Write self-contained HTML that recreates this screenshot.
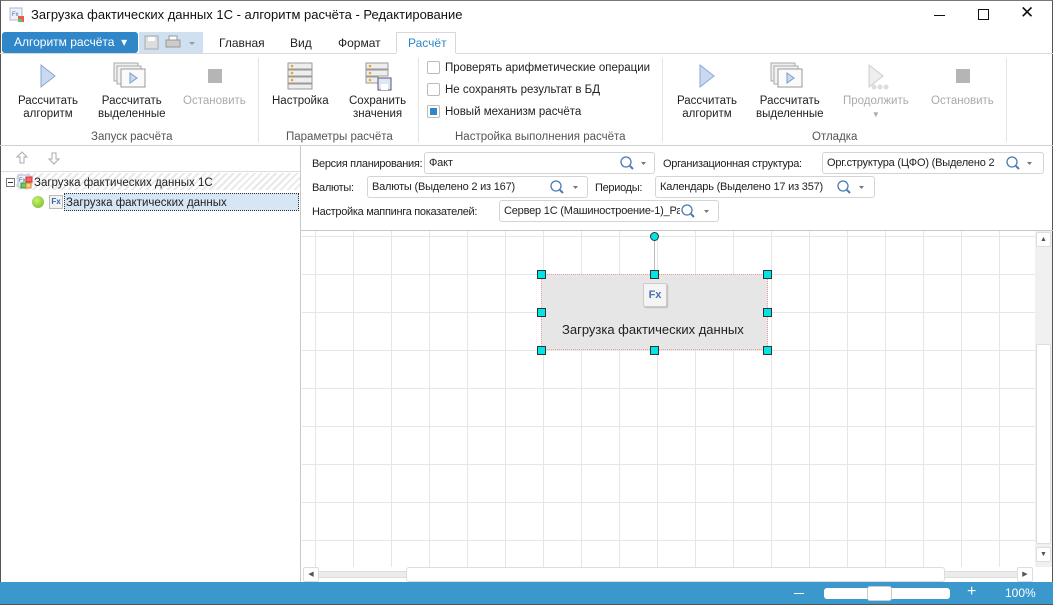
<!DOCTYPE html>
<html><head><meta charset="utf-8"><style>
*{box-sizing:border-box;margin:0;padding:0}
body{width:1053px;height:605px;overflow:hidden;background:#fff;font-family:"Segoe UI","Liberation Sans","DejaVu Sans",sans-serif;font-size:12px;color:#222;position:relative}
.abs{position:absolute}
.win{position:absolute;left:0;top:0;width:1053px;height:605px;border:1px solid #555;border-top-color:#777}
.t{position:absolute;white-space:nowrap}
.lbl{font-size:11.5px;text-align:center;line-height:13px}
.gray{color:#aaa}
.grp{color:#555;font-size:11.5px}
.combo{position:absolute;height:22px;border:1px solid #d4d4d4;border-radius:3px;background:#fff;font-size:11px;padding:0 4px;line-height:21px;white-space:nowrap;overflow:hidden;letter-spacing:-0.2px}
.pl{position:absolute;white-space:nowrap;font-size:11px;line-height:14px;letter-spacing:-0.3px}
.chk{position:absolute;width:13px;height:13px;border:1px solid #bbb;border-radius:2px;background:#fff}
</style></head><body>
<div class="win"></div>
<svg class="abs" style="left:9px;top:7px" width="16" height="16"><rect x="1" y="1" width="12" height="12" fill="#eef2f8" stroke="#b0b8c8"/><text x="3" y="9" font-size="6" fill="#3366aa" font-family="Liberation Sans">Fx</text><rect x="9" y="9" width="6" height="6" fill="#e55"/><rect x="9" y="12" width="4" height="3" fill="#5c5"/></svg>
<div class="t" style="left:31px;top:7px;font-size:13px;color:#111">Загрузка фактических данных 1С - алгоритм расчёта - Редактирование</div>
<div class="abs" style="left:934px;top:15px;width:11px;height:1px;background:#111"></div>
<div class="abs" style="left:978px;top:9px;width:11px;height:11px;border:1px solid #111"></div>
<div class="t" style="left:1020px;top:3px;font-size:17px;color:#111;font-weight:300">✕</div>
<div class="abs" style="left:2px;top:32px;width:136px;height:21px;background:#2f87c9;border-radius:3px"></div>
<div class="t" style="left:14px;top:35px;color:#fff;font-size:12px">Алгоритм расчёта &nbsp;▾</div>
<div class="abs" style="left:139px;top:32px;width:64px;height:21px;background:#cfe0f0"></div>
<svg class="abs" style="left:144px;top:35px" width="56" height="16"><rect x="1" y="1" width="13" height="13" fill="#ddd" stroke="#aaa"/><rect x="4" y="2" width="7" height="4" fill="#fff"/><rect x="22" y="5" width="14" height="7" fill="#ccc" stroke="#999"/><rect x="25" y="1" width="8" height="4" fill="#fff" stroke="#999"/><path d="M45 7l3 3 3-3z" fill="#999"/></svg>
<div class="t" style="left:219px;top:36px">Главная</div>
<div class="t" style="left:290px;top:36px">Вид</div>
<div class="t" style="left:338px;top:36px">Формат</div>
<div class="abs" style="left:396px;top:32px;width:60px;height:22px;border:1px solid #d8d8d8;border-bottom:none;background:#fff"></div>
<div class="t" style="left:408px;top:36px;color:#2f87c9">Расчёт</div>
<div class="abs" style="left:0;top:53px;width:1053px;height:1px;background:#dadada"></div>
<div class="abs" style="left:396px;top:53px;width:60px;height:1px;background:#fff"></div>
<div class="abs" style="left:0;top:145px;width:1053px;height:1px;background:#d0d0d0"></div>
<div class="abs" style="left:258px;top:58px;width:1px;height:84px;background:#e4e4e4"></div>
<div class="abs" style="left:418px;top:58px;width:1px;height:84px;background:#e4e4e4"></div>
<div class="abs" style="left:662px;top:58px;width:1px;height:84px;background:#e4e4e4"></div>
<div class="abs" style="left:1006px;top:58px;width:1px;height:84px;background:#e4e4e4"></div>
<svg class="abs" style="left:38px;top:63px" width="20" height="26"><path d="M3 2L17 13 3 24z" fill="#c9d9f0" stroke="#8aa8d0"/></svg>
<svg class="abs" style="left:112px;top:61px" width="36" height="30"><rect x="2" y="2" width="24" height="18" fill="#eee" stroke="#aaa"/><rect x="5" y="5" width="24" height="18" fill="#f2f2f2" stroke="#aaa"/><rect x="9" y="8" width="24" height="18" fill="#fafafa" stroke="#999"/><path d="M18 12l7 5-7 5z" fill="#c9d9f0" stroke="#7a9cc8"/></svg>
<div class="abs" style="left:208px;top:69px;width:14px;height:14px;background:#b5b5b5"></div>
<div class="t lbl" style="left:18px;top:95px">Рассчитать<br>алгоритм</div>
<div class="t lbl" style="left:98px;top:95px">Рассчитать<br>выделенные</div>
<div class="t lbl gray" style="left:183px;top:95px">Остановить</div>
<div class="t grp" style="left:91px;top:131px">Запуск расчёта</div>
<svg class="abs" style="left:287px;top:62px" width="26" height="28"><g fill="#eee" stroke="#999"><rect x="1" y="1" width="24" height="6"/><rect x="1" y="8" width="24" height="6"/><rect x="1" y="15" width="24" height="6"/><rect x="1" y="22" width="24" height="5"/></g><g fill="#f5a020"><circle cx="5" cy="4" r="1.3"/><circle cx="5" cy="11" r="1.3"/><circle cx="5" cy="18" r="1.3"/></g></svg>
<svg class="abs" style="left:365px;top:62px" width="28" height="30"><g fill="#eee" stroke="#999"><rect x="1" y="1" width="22" height="6"/><rect x="1" y="8" width="22" height="6"/><rect x="1" y="15" width="12" height="6"/></g><rect x="13" y="16" width="13" height="12" fill="#dde6f2" stroke="#557"/><rect x="16" y="22" width="7" height="6" fill="#fff"/><g fill="#f5a020"><circle cx="5" cy="4" r="1.3"/><circle cx="5" cy="11" r="1.3"/><circle cx="5" cy="18" r="1.3"/></g></svg>
<div class="t lbl" style="left:272px;top:95px">Настройка</div>
<div class="t lbl" style="left:349px;top:95px">Сохранить<br>значения</div>
<div class="t grp" style="left:286px;top:131px">Параметры расчёта</div>
<div class="chk" style="left:427px;top:61px"></div><div class="t" style="left:445px;top:62px;font-size:11.5px">Проверять арифметические операции</div>
<div class="chk" style="left:427px;top:83px"></div><div class="t" style="left:445px;top:84px;font-size:11.5px">Не сохранять результат в БД</div>
<div class="chk" style="left:427px;top:105px"></div><div class="abs" style="left:430px;top:108px;width:7px;height:7px;background:#2f87c9"></div><div class="t" style="left:445px;top:106px;font-size:11.5px">Новый механизм расчёта</div>
<div class="t grp" style="left:455px;top:131px">Настройка выполнения расчёта</div>
<svg class="abs" style="left:697px;top:63px" width="20" height="26"><path d="M3 2L17 13 3 24z" fill="#c9d9f0" stroke="#8aa8d0"/></svg>
<svg class="abs" style="left:769px;top:61px" width="36" height="30"><rect x="2" y="2" width="24" height="18" fill="#eee" stroke="#aaa"/><rect x="5" y="5" width="24" height="18" fill="#f2f2f2" stroke="#aaa"/><rect x="9" y="8" width="24" height="18" fill="#fafafa" stroke="#999"/><path d="M18 12l7 5-7 5z" fill="#c9d9f0" stroke="#7a9cc8"/></svg>
<svg class="abs" style="left:866px;top:63px" width="24" height="28"><path d="M3 2L17 13 3 24z" fill="#eee" stroke="#ccc"/><circle cx="8" cy="24" r="2.5" fill="#ddd"/><circle cx="14" cy="24" r="2.5" fill="#ddd"/><circle cx="20" cy="24" r="2.5" fill="#ddd"/></svg>
<div class="abs" style="left:956px;top:69px;width:14px;height:14px;background:#b5b5b5"></div>
<div class="t lbl" style="left:677px;top:95px">Рассчитать<br>алгоритм</div>
<div class="t lbl" style="left:756px;top:95px">Рассчитать<br>выделенные</div>
<div class="t lbl gray" style="left:843px;top:95px">Продолжить<br><span style="font-size:8px">▼</span></div>
<div class="t lbl gray" style="left:931px;top:95px">Остановить</div>
<div class="t grp" style="left:812px;top:131px">Отладка</div>
<div class="abs" style="left:300px;top:146px;width:1px;height:437px;background:#c8c8c8"></div>
<svg class="abs" style="left:15px;top:151px" width="50" height="14"><path d="M7 1L2 6h3v6h4V6h3z" fill="none" stroke="#aaa"/><path d="M39 13l-5-5h3V2h4v6h3z" fill="none" stroke="#aaa"/></svg>
<div class="abs" style="left:1px;top:171px;width:299px;height:1px;background:#ddd"></div>
<div class="abs" style="left:16px;top:173px;width:284px;height:17px;background:repeating-linear-gradient(135deg,#fff 0 3px,#e8e8e8 3px 5px)"></div>
<div class="abs" style="left:6px;top:178px;width:9px;height:9px;border:1px solid #777;background:#fff"></div><div class="abs" style="left:8px;top:182px;width:5px;height:1px;background:#333"></div>
<svg class="abs" style="left:17px;top:174px" width="16" height="16"><rect x="1" y="1" width="12" height="12" fill="#eef2f8" stroke="#b0b8c8"/><text x="2" y="8" font-size="6" fill="#3366aa" font-family="Liberation Sans">Fx</text><rect x="9" y="3" width="6" height="5" fill="#f66" stroke="#c33"/><rect x="4" y="9" width="5" height="5" fill="#6c6" stroke="#393"/><rect x="9" y="9" width="5" height="5" fill="#fc8" stroke="#c83"/></svg>
<div class="t" style="left:34px;top:177px;font-size:11.5px">Загрузка фактических данных 1С</div>
<div class="abs" style="left:64px;top:193px;width:235px;height:18px;background:#d6e6f5;border:1px dotted #333"></div>
<div class="abs" style="left:32px;top:196px;width:12px;height:12px;border-radius:50%;background:radial-gradient(circle at 40% 35%,#c8f070,#6cb820)"></div>
<div class="abs" style="left:49px;top:195px;width:14px;height:14px;border:1px solid #bbb;background:#f2f2f2;font-size:8px;color:#3366aa;font-weight:bold;line-height:12px;text-align:center;font-family:'Liberation Sans'">Fx</div>
<div class="t" style="left:66px;top:197px;font-size:11.5px">Загрузка фактических данных</div>
<div class="pl" style="left:312px;top:157px">Версия планирования:</div>
<div class="combo" style="left:424px;top:152px;width:231px">Факт</div>
<div class="pl" style="left:663px;top:157px">Организационная структура:</div>
<div class="combo" style="left:822px;top:152px;width:222px">Орг.структура (ЦФО) (Выделено 2</div>
<div class="pl" style="left:312px;top:181px">Валюты:</div>
<div class="combo" style="left:367px;top:176px;width:221px">Валюты (Выделено 2 из 167)</div>
<div class="pl" style="left:595px;top:181px">Периоды:</div>
<div class="combo" style="left:655px;top:176px;width:220px">Календарь (Выделено 17 из 357)</div>
<div class="pl" style="left:312px;top:205px">Настройка маппинга показателей:</div>
<div class="combo" style="left:499px;top:200px;width:220px">Сервер 1С (Машиностроение-1)_Ра</div>
<svg class="abs" style="left:0;top:0" width="1053" height="230">
<g fill="#fff" stroke="none"><rect x="1003" y="154" width="36" height="18"/><rect x="680" y="202" width="36" height="18"/><rect x="834" y="178" width="36" height="18"/></g>
<g fill="none" stroke="#4a7bb0" stroke-width="1.3"><circle cx="626" cy="162" r="5"/><circle cx="1012" cy="162" r="5"/><circle cx="556" cy="186" r="5"/><circle cx="843" cy="186" r="5"/><circle cx="687" cy="210" r="5"/></g>
<g stroke="#4a7bb0" stroke-width="2"><path d="M630 166l3 3M1016 166l3 3M560 190l3 3M847 190l3 3M691 214l3 3"/></g>
<g fill="#777"><path d="M641 162h5l-2.5 3z M1027 162h5l-2.5 3z M573 186h5l-2.5 3z M859 186h5l-2.5 3z M704 210h5l-2.5 3z"/></g>
</svg>
<div class="abs" style="left:301px;top:230px;width:752px;height:1px;background:#c8c8c8"></div>
<div class="abs" style="left:302px;top:231px;width:733px;height:336px;background-color:#fff;background-image:linear-gradient(90deg,#e6e6e6 1px,transparent 1px),linear-gradient(#e6e6e6 1px,transparent 1px);background-size:38px 38px;background-position:13px 5px"></div>
<div class="abs" style="left:1035px;top:231px;width:17px;height:336px;background:#f0f0f0"></div>
<div class="abs" style="left:1036px;top:232px;width:15px;height:15px;background:#fff;border:1px solid #ddd;border-radius:2px;font-size:7px;text-align:center;line-height:13px;color:#555">▲</div>
<div class="abs" style="left:1036px;top:344px;width:15px;height:200px;background:#fff;border:1px solid #ddd;border-radius:2px"></div>
<div class="abs" style="left:1036px;top:547px;width:15px;height:15px;background:#fff;border:1px solid #ddd;border-radius:2px;font-size:7px;text-align:center;line-height:13px;color:#555">▼</div>
<div class="abs" style="left:302px;top:567px;width:733px;height:15px;background:#fff"></div>
<div class="abs" style="left:305px;top:571px;width:725px;height:7px;background:#ececec;border:1px solid #ddd"></div>
<div class="abs" style="left:303px;top:567px;width:16px;height:15px;background:#fff;border:1px solid #ddd;border-radius:2px;font-size:7px;text-align:center;line-height:13px;color:#555">◀</div>
<div class="abs" style="left:406px;top:567px;width:539px;height:15px;background:#fff;border:1px solid #ddd;border-radius:3px"></div>
<div class="abs" style="left:1017px;top:567px;width:16px;height:15px;background:#fff;border:1px solid #ddd;border-radius:2px;font-size:7px;text-align:center;line-height:13px;color:#555">▶</div>
<div class="abs" style="left:541px;top:274px;width:227px;height:76px;background:#e6e6e6;border:1px dotted #f0a0a0"></div>
<div class="abs" style="left:654px;top:240px;width:1px;height:34px;background:#bbb"></div>
<div class="abs" style="left:643px;top:283px;width:24px;height:24px;background:#f4f4f4;border:1px solid #ccc;border-radius:2px;box-shadow:1px 1px 1px #bbb;font-family:'Liberation Sans';font-weight:bold;font-size:11px;color:#4a6fb0;text-align:center;line-height:22px">Fx</div>
<div class="t" style="left:562px;top:322px;font-size:13px;color:#222">Загрузка фактических данных</div>
<div class="abs" style="left:650px;top:232px;width:9px;height:9px;border-radius:50%;background:#00e5e5;border:1px solid #333"></div>
<div class="abs" style="left:537px;top:270px;width:9px;height:9px;background:#00e5e5;border:1px solid #333"></div>
<div class="abs" style="left:650px;top:270px;width:9px;height:9px;background:#00e5e5;border:1px solid #333"></div>
<div class="abs" style="left:763px;top:270px;width:9px;height:9px;background:#00e5e5;border:1px solid #333"></div>
<div class="abs" style="left:537px;top:308px;width:9px;height:9px;background:#00e5e5;border:1px solid #333"></div>
<div class="abs" style="left:763px;top:308px;width:9px;height:9px;background:#00e5e5;border:1px solid #333"></div>
<div class="abs" style="left:537px;top:346px;width:9px;height:9px;background:#00e5e5;border:1px solid #333"></div>
<div class="abs" style="left:650px;top:346px;width:9px;height:9px;background:#00e5e5;border:1px solid #333"></div>
<div class="abs" style="left:763px;top:346px;width:9px;height:9px;background:#00e5e5;border:1px solid #333"></div>
<div class="abs" style="left:0;top:582px;width:1053px;height:22px;background:#3b98cd"></div>
<div class="abs" style="left:0;top:604px;width:1053px;height:1px;background:#555"></div>
<div class="abs" style="left:794px;top:593px;width:10px;height:1px;background:#fff"></div>
<div class="abs" style="left:824px;top:588px;width:126px;height:11px;background:#fff;border-radius:3px"></div>
<div class="abs" style="left:867px;top:586px;width:25px;height:15px;background:#fff;border:1px solid #ccc;border-radius:3px"></div>
<div class="t" style="left:967px;top:583px;color:#fff;font-size:16px">+</div>
<div class="t" style="left:1005px;top:586px;color:#fff;font-size:12px">100%</div>
</body></html>
